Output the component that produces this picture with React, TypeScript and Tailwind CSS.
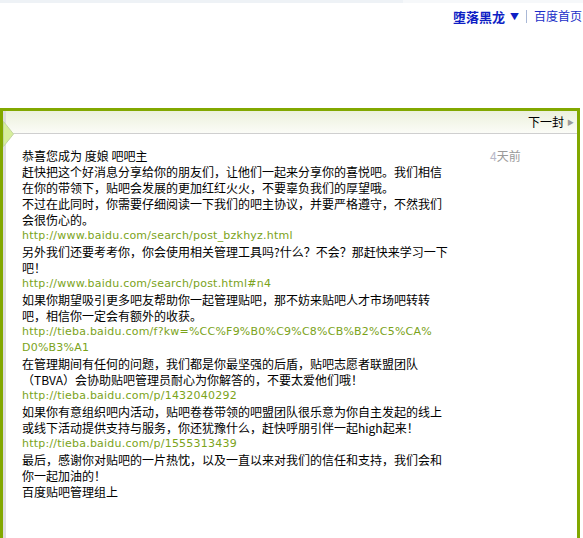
const lines: { t: string; link?: boolean }[] = [
  { t: "恭喜您成为 度娘 吧吧主" },
  { t: "赶快把这个好消息分享给你的朋友们，让他们一起来分享你的喜悦吧。我们相信" },
  { t: "在你的带领下，贴吧会发展的更加红红火火，不要辜负我们的厚望哦。" },
  { t: "不过在此同时，你需要仔细阅读一下我们的吧主协议，并要严格遵守，不然我们" },
  { t: "会很伤心的。" },
  { t: "http://www.baidu.com/search/post_bzkhyz.html", link: true },
  { t: "另外我们还要考考你，你会使用相关管理工具吗?什么？不会？那赶快来学习一下" },
  { t: "吧！" },
  { t: "http://www.baidu.com/search/post.html#n4", link: true },
  { t: "如果你期望吸引更多吧友帮助你一起管理贴吧，那不妨来贴吧人才市场吧转转" },
  { t: "吧，相信你一定会有额外的收获。" },
  { t: "http://tieba.baidu.com/f?kw=%CC%F9%B0%C9%C8%CB%B2%C5%CA%", link: true },
  { t: "D0%B3%A1", link: true },
  { t: "在管理期间有任何的问题，我们都是你最坚强的后盾，贴吧志愿者联盟团队" },
  { t: "（TBVA）会协助贴吧管理员耐心为你解答的，不要太爱他们哦！" },
  { t: "http://tieba.baidu.com/p/1432040292", link: true },
  { t: "如果你有意组织吧内活动，贴吧卷卷带领的吧盟团队很乐意为你自主发起的线上" },
  { t: "或线下活动提供支持与服务，你还犹豫什么，赶快呼朋引伴一起high起来！" },
  { t: "http://tieba.baidu.com/p/1555313439", link: true },
  { t: "最后，感谢你对贴吧的一片热忱，以及一直以来对我们的信任和支持，我们会和" },
  { t: "你一起加油的！" },
  { t: "百度贴吧管理组上" },
]

export default function App() {
  return (
    <div className="w-[583px] h-[538px] overflow-hidden bg-white font-['Noto_Sans_CJK_SC',sans-serif] text-[12px] text-black">
      {/* top strip */}
      <div className="flex h-[3px]">
        <div className="w-[403px] bg-[#eef2f6]" />
        <div className="flex-1 bg-[#f6f8fa]" />
      </div>

      {/* user nav */}
      <div className="flex h-[26px] items-center justify-end pr-[1px] leading-none">
        <a className="text-[13px] font-bold text-[#0f1fc4]">堕落黑龙</a>
        <span className="ml-[5px] text-[9px] text-[#0f1fc4]">▼</span>
        <span className="mx-[7px] h-[13px] w-px bg-[#a9b8d6]" />
        <a className="text-[12px] text-[#1a2fc8]">百度首页</a>
      </div>

      {/* message frame */}
      <div className="relative mr-[3px] mt-[79px] h-[430px] border-x-[3px] border-t-[3px] border-[#82a800]">
        <div className="h-full border-l-[3px] border-[#dedede]">
          <div className="flex h-[23px] items-center justify-end border-b border-[#cfcfcf] bg-gradient-to-b from-[#ecf1dc] to-[#fbfcf7] pr-[3px]">
            <span className="leading-none">下一封</span>
            <span className="ml-[3px] text-[7px] text-[#9a9a9a]">▶</span>
          </div>

          <div className="flex pl-4 pt-[14px]">
            <div className="w-[440px] leading-4">
              {lines.map((l, i) =>
                l.link ? (
                  <div key={i} className="font-['DejaVu_Sans',sans-serif] text-[11px] tracking-[0.22px] text-[#7ba31a]">
                    {l.t}
                  </div>
                ) : (
                  <div key={i}>{l.t}</div>
                )
              )}
            </div>
            <div className="ml-[28px] leading-4 text-[#9a9a9a]">
              <span className="text-[#b8b8c8]">4</span>天前
            </div>
          </div>
        </div>

        {/* left pointer */}
        <svg className="absolute left-0 top-[10px]" width="11" height="26" viewBox="0 0 11 26">
          <polygon points="0.5,0.5 10.5,13 0.5,25.5" fill="#d7ef9c" stroke="#c4d6a0" />
        </svg>
      </div>
    </div>
  )
}
